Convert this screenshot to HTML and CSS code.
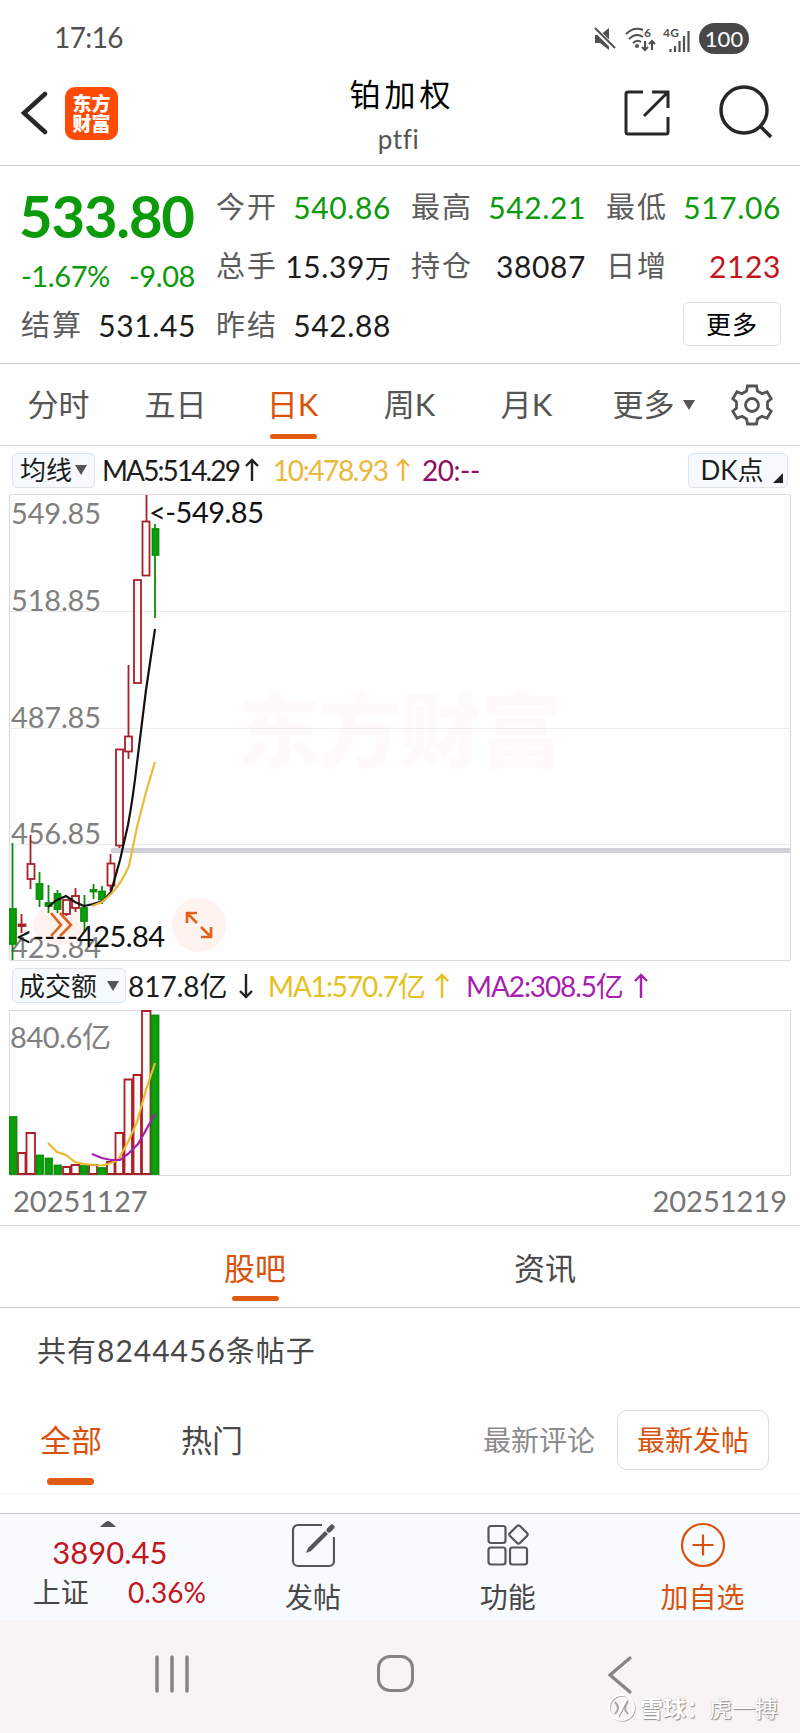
FILE: index.html
```html
<!DOCTYPE html>
<html lang="zh-CN">
<head>
  <meta charset="UTF-8" />
  <title>铂加权 ptfi</title>
  <link rel="stylesheet" href="styles.css">
</head>
<body>
  <div class="status">
    <span class="clock">17:16</span>
    <div class="status-icons">
      <svg class="i-mute" width="24" height="24" viewBox="0 0 24 24"><path d="M2 8h5l9-7v22l-9-7H2z" fill="#505050"/><path d="M1 1l21 21" stroke="#fff" stroke-width="5"/><path d="M2 1l20 20" stroke="#505050" stroke-width="2"/></svg>
      <svg class="i-wifi" width="34" height="26" viewBox="0 0 34 26" fill="none" stroke="#505050" stroke-width="2"><path d="M2 8Q10 0 19 4M5 13Q12 6 19 11M9 17Q13 13 17 16"/><circle cx="13" cy="20" r="1" fill="#505050"/><path d="M21 15v9M18 21l3 3 3-3M28 24v-9M25 18l3-3 3 3"/><text x="20" y="11" class="tiny">6</text></svg>
      <svg class="i-signal" width="30" height="28" viewBox="0 0 30 28"><text x="1" y="12" class="tiny" textLength="16">4G</text><path d="M8.500 27v-3M13 27v-6M17.500 27v-11M22 27v-16M26.500 27V6" stroke="#505050" stroke-width="2.200"/></svg>
      <span class="battery">100</span>
    </div>
  </div>

  <header>
    <svg class="back" width="30" height="44" viewBox="0 0 30 44"><path d="M25 3L4 22l21 19" fill="none" stroke="#272727" stroke-width="4.500" stroke-linecap="round"/></svg>
    <div class="logo">东方<br>财富</div>
    <div class="title"><h1>铂加权</h1><p>ptfi</p></div>
    <svg class="share" width="46" height="46" viewBox="0 0 46 46" fill="none" stroke="#272727" stroke-width="3"><path d="M19 2H4a2 2 0 0 0-2 2v38a2 2 0 0 0 2 2h38a2 2 0 0 0 2-2V27M28 2h16v16M44 2L20 26"/></svg>
    <svg class="search" width="56" height="56" viewBox="0 0 56 56" fill="none" stroke="#272727" stroke-width="3.500"><circle cx="26" cy="26" r="23"/><path d="M42 42l11 11"/></svg>
  </header>

  <section class="quote">
    <div class="price green">
      <b>533.80</b>
      <p><span>-1.67%</span><span>-9.08</span></p>
    </div>
    <div class="cell"><i>今开</i><span class="green">540.86</span></div>
    <div class="cell"><i>最高</i><span class="green">542.21</span></div>
    <div class="cell"><i>最低</i><span class="green">517.06</span></div>
    <div class="cell"><i>总手</i><span>15.39<em>万</em></span></div>
    <div class="cell"><i>持仓</i><span>38087</span></div>
    <div class="cell"><i>日增</i><span class="red">2123</span></div>
    <div class="cell"><i>结算</i><span>531.45</span></div>
    <div class="cell"><i>昨结</i><span>542.88</span></div>
    <button class="more">更多</button>
  </section>

  <nav class="periods">
    <a>分时</a><a>五日</a><a class="on">日K</a><a>周K</a><a>月K</a><a>更多</a>
    <svg class="caret" width="12" height="10" viewBox="0 0 12 10"><path d="M0 0h12L6 10z" fill="#555"/></svg>
    <svg class="gear" width="42" height="42" viewBox="-21 -21 42 42" fill="none" stroke="#555" stroke-width="2.800"><path d="M-4.500-19h9l1 5 4.500 2.700 5-2 4.200 7-3.700 3.300v6l3.700 3.300-4.200 7-5-2-4.500 2.700-1 5h-9l-1-5-4.500-2.700-5 2-4.200-7 3.700-3.300v-6l-3.700-3.300 4.200-7 5 2 4.500-2.700z"/><circle r="6.500"/></svg>
  </nav>

  <div class="ma-row">
    <span class="pick">均线<svg width="12" height="10" viewBox="0 0 12 10"><path d="M0 0h12L6 10z" fill="#555"/></svg></span>
    <span class="ma5">MA5:514.29</span>
    <svg class="arrow" width="14" height="24" viewBox="0 0 14 24"><path d="M7 23V2M1 8l6-6 6 6"/></svg>
    <span class="ma10">10:478.93</span>
    <svg class="arrow gold" width="14" height="24" viewBox="0 0 14 24"><path d="M7 23V2M1 8l6-6 6 6"/></svg>
    <span class="ma20">20:--</span>
    <span class="pick dk">DK点<svg width="10" height="10" viewBox="0 0 10 10"><path d="M10 0v10H0z" fill="#222"/></svg></span>
  </div>

  <svg class="chart" width="782" height="467" viewBox="9 494 782 467">
    <text class="brand" x="238" y="761" textLength="324">东方财富</text>
    <path class="grid" d="M9 611.500h781M9 728.500h781M9 844.500h781"/>
    <path class="frame" d="M9.500 494.500h781v466h-781z"/>
    <g class="axis">
      <text x="11" y="524" textLength="90">549.85</text>
      <text x="11" y="611" textLength="90">518.85</text>
      <text x="11" y="728" textLength="90">487.85</text>
      <text x="11" y="844" textLength="90">456.85</text>
      <text x="11" y="958" textLength="90">425.84</text>
    </g>
    <path d="M111 850.500h679" stroke="#d0d0d9" stroke-width="5"/>
    <ellipse cx="59" cy="925" rx="26" ry="20" fill="#fff3f0"/>
    <circle cx="199" cy="925" r="27" fill="#fff3f0"/>
    <g class="up">
      <path d="M21.500 914v19M30.500 835v29M30.500 879v10M66.500 914v2M75.500 888v8M75.500 908v4M110.500 854v9M110.500 885v6M119.500 845v3M128.500 665v71M128.500 751v8M146.500 495v26"/>
      <rect x="18.500" y="924.500" width="7" height="1.500"/>
      <rect x="27.500" y="864" width="7" height="15"/>
      <rect x="63" y="900" width="7" height="14"/>
      <rect x="72" y="896" width="7" height="12"/>
      <rect x="107.500" y="863.500" width="7" height="22"/>
      <rect x="116" y="749.500" width="7" height="96"/>
      <rect x="125" y="736.500" width="7" height="15"/>
      <rect x="134" y="580" width="7" height="103"/>
      <rect x="142.500" y="521.500" width="7" height="54"/>
    </g>
    <g class="down">
      <path d="M12.500 843v117M39.500 872v35M48.500 885v28M57.500 890v23M84.500 895v37M93.500 884v15M102 886v18M155 524v94"/>
      <rect x="9.500" y="909" width="6.500" height="35"/>
      <rect x="36.500" y="884" width="6" height="15"/>
      <rect x="45.500" y="903" width="6" height="3"/>
      <rect x="54.500" y="894" width="6" height="15"/>
      <rect x="81" y="908" width="6" height="13"/>
      <rect x="90.500" y="890" width="6" height="1.500"/>
      <rect x="99" y="891.500" width="6" height="8"/>
      <rect x="152.500" y="529" width="6" height="26"/>
    </g>
    <path class="line" stroke="#111" d="M48 907L57 900L66 896L75 902L84 906L93 904L103 901L111 892L120 860L128 825Q133 798 137 763L146 690L155 629"/>
    <path class="line" stroke="#e8b93c" d="M92 906L102 902L111 894Q121 884 129 866L137 827L146 792L155 762"/>
    <path class="orange" d="M51 913l10 12-10 11M60 913l11 12-11 11M187 923v-10h10M187 913l10 10M211 927v10h-10M211 937l-10-10"/>
    <g class="mark">
      <text x="149" y="523" textLength="115">&lt;-549.85</text>
      <text x="15" y="947" textLength="63" lengthAdjust="spacingAndGlyphs">&lt;----</text>
      <text x="77" y="947" textLength="88">425.84</text>
    </g>
  </svg>

  <div class="ma-row vol-row">
    <span class="pick vol">成交额<svg width="12" height="10" viewBox="0 0 12 10"><path d="M0 0h12L6 10z" fill="#555"/></svg></span>
    <span class="v0">817.8亿</span>
    <svg class="arrow" width="14" height="26" viewBox="0 0 14 26"><path d="M7 1v23M1 18l6 6 6-6"/></svg>
    <span class="v1">MA1:570.7亿</span>
    <svg class="arrow gold2" width="14" height="26" viewBox="0 0 14 26"><path d="M7 25V2M1 8l6-6 6 6"/></svg>
    <span class="v2">MA2:308.5亿</span>
    <svg class="arrow violet" width="14" height="26" viewBox="0 0 14 26"><path d="M7 25V2M1 8l6-6 6 6"/></svg>
  </div>

  <svg class="chart" width="782" height="166" viewBox="9 1010 782 166">
    <path class="frame" d="M9.500 1010.500h781v165h-781z"/>
    <g class="axis"><text x="10" y="1048" textLength="101">840.6亿</text></g>
    <g class="up">
      <path d="M18 1174v-21h7.500v21zM26.500 1174v-41h8.500v41zM63 1174v-7h7v7zM71.500 1174v-9h8v9zM89 1174v-9h8v9zM107 1174v-12h7.500v12zM115.500 1174v-41h7.500v41zM124.500 1174v-94.500h7.500v94.500zM133.500 1174v-99h7.500v99zM142 1174v-163h8.500v163z"/>
    </g>
    <g class="down">
      <rect x="9.500" y="1117" width="7" height="57"/>
      <rect x="36.500" y="1155.500" width="6.500" height="18.500"/>
      <rect x="45.500" y="1158.500" width="6.500" height="15.500"/>
      <rect x="54.500" y="1165.500" width="6.500" height="8.500"/>
      <rect x="80.500" y="1166" width="7" height="8"/>
      <rect x="98" y="1168" width="8" height="6"/>
      <rect x="151.500" y="1015.500" width="7" height="158.500"/>
    </g>
    <path class="line" stroke="#eab92c" d="M48 1143L57 1152L66 1155L75 1162L84 1164L93 1165L102 1165.500L111 1163L118 1160L128 1142L137 1122L146 1090L155 1063"/>
    <path class="line" stroke="#a61fae" d="M92 1154L102 1158L111 1160L120 1160L128 1154L138 1144L146 1130L155 1114"/>
  </svg>

  <div class="dates"><span>20251127</span><span>20251219</span></div>

  <nav class="tabs"><a class="on">股吧</a><a>资讯</a></nav>

  <section class="posts">
    <p class="count">共有<span>8244456</span>条帖子</p>
    <div class="filters">
      <a class="on">全部</a><a class="hot">热门</a>
      <span class="sort">最新评论</span><button class="sort on">最新发帖</button>
    </div>
  </section>

  <footer>
    <div class="index">
      <svg width="16" height="6" viewBox="0 0 16 6"><path d="M0 6Q6 0 8 0t8 6z" fill="#555"/></svg>
      <b class="red">3890.45</b>
      <p><span>上证</span><span class="red">0.36%</span></p>
    </div>
    <div class="act">
      <svg width="44" height="44" viewBox="0 0 44 44" fill="none" stroke="#555" stroke-width="2.200"><path d="M31 2H7a5 5 0 0 0-5 5v31a5 5 0 0 0 5 5h31a5 5 0 0 0 5-5V14"/><path d="M15 30l2-5L34 8l3 3-17 17z" fill="#555" stroke="none"/><path d="M38 7l3-3" stroke-width="5" stroke-linecap="round"/></svg>
      发帖
    </div>
    <div class="act">
      <svg width="44" height="44" viewBox="0 0 44 44" fill="none" stroke="#555" stroke-width="2.200"><rect x="2.500" y="3" width="17" height="17" rx="2.500"/><rect x="2.500" y="24.500" width="17" height="17" rx="2.500"/><rect x="24" y="24.500" width="17" height="17" rx="2.500"/><rect x="25.500" y="4.500" width="14" height="14" rx="2" transform="rotate(45 32.500 11.500)"/></svg>
      功能
    </div>
    <div class="act add">
      <svg width="46" height="46" viewBox="0 0 46 46" fill="none" stroke="#d9520c" stroke-width="2.200"><circle cx="23" cy="23" r="21"/><path d="M12.500 23h21M23 12.500v21"/></svg>
      加自选
    </div>
  </footer>

  <div class="sysnav">
    <svg class="recent" width="36" height="38" viewBox="0 0 36 38"><path d="M3 2v34M18 2v34M33 2v34" stroke="#858485" stroke-width="3.500" stroke-linecap="round"/></svg>
    <span class="home"></span>
    <svg class="prev" width="26" height="40" viewBox="0 0 26 40"><path d="M23 3L3 20l20 17" fill="none" stroke="#858485" stroke-width="3.200" stroke-linecap="round"/></svg>
    <div class="credit">
      <svg width="28" height="28" viewBox="0 0 28 28" fill="none"><circle cx="14.500" cy="14.500" r="12.500" stroke="#aaa" stroke-width="1.500"/><circle cx="13.500" cy="13.500" r="12.500" stroke="#fff" stroke-width="2"/><path d="M7 8q6 6 0 12M20 8q-6 6 0 12" stroke="#a5a5a5" stroke-width="2"/><path d="M18 5L9 23" stroke="#fff" stroke-width="3"/><path d="M20 6l-9 17" stroke="#a5a5a5" stroke-width="1.200"/></svg>
      <span><b>雪球：</b>虎一搏</span>
    </div>
  </div>
</body>
</html>
```

FILE: styles.css
```css
* { box-sizing: border-box; margin: 0; padding: 0; }
body { width: 800px; height: 1733px; overflow: hidden; background: #fefefe; color: #1c1c1c; font-family: Lato, "Noto Sans CJK SC", sans-serif; font-size: 30px; line-height: 1; }
svg { display: block; flex: none; }
i, em { font-style: normal; }
a, span, i, b, p, h1 { white-space: nowrap; }
button { background: #fefefe; font-family: inherit; line-height: 1; }
.green { color: #0a9a0a; }
.red { color: #c3161c; }

.status { height: 68px; padding: 9px 51px 0 54px; display: flex; align-items: center; justify-content: space-between; color: #505050; font-size: 28px; }
.clock { margin-top: -3px; letter-spacing: -.6px; }
.status-icons { display: flex; align-items: center; }
.i-wifi { margin-left: 7px; }
.i-signal { margin-left: 4px; }
.tiny { font-size: 12px; font-weight: bold; fill: #505050; stroke: none; }
.battery { width: 50px; height: 31px; margin-left: 7px; border-radius: 16px; background: #484848; color: #fff; font-size: 22px; line-height: 31px; text-align: center; }

header { height: 98px; padding: 0 26px 7px 20px; border-bottom: 1px solid #ccc; display: flex; align-items: center; }
.logo { width: 53px; height: 53px; margin-left: 15px; padding-top: 7px; border-radius: 10px; background: #ff4b05; color: #fff; font-size: 19px; font-weight: 900; line-height: 20px; text-align: center; }
.title { flex: 1; margin: 3px 0 0 172px; text-align: center; }
.title h1 { color: #000; font-size: 31px; font-weight: normal; letter-spacing: 4px; line-height: 36px; }
.title p { margin-top: 12px; padding-right: 7px; color: #555; font-size: 26px; line-height: 30px; letter-spacing: .6px; }
.share { margin-left: 110px; }
.search { margin-left: 48px; margin-top: -2px; }

.quote { height: 198px; padding: 11px 19px 11px 21px; border-bottom: 1px solid #ccc; display: grid; grid-template-columns: repeat(4, 174px); grid-template-rows: repeat(3, 59px); column-gap: 21px; }
.price { grid-row: span 2; }
.price b { display: block; margin-left: -2px; font-size: 58px; line-height: 78px; letter-spacing: -1.2px; }
.price p { display: flex; justify-content: space-between; font-size: 29px; line-height: 41px; letter-spacing: -.4px; }
.cell { display: flex; align-items: center; justify-content: space-between; }
.cell i { color: #5c5c5c; font-size: 29px; letter-spacing: 2px; }
.cell span { margin-right: -1px; letter-spacing: .6px; }
.cell em { font-size: 26px; letter-spacing: 0; }
.more { grid-column: 4; width: 98px; height: 44px; margin: 7px -1px 0 0; justify-self: end; border: 1px solid #ddd; border-radius: 5px; font-size: 25px; letter-spacing: 1px; }

.periods { height: 82px; border-bottom: 1px solid #d4d4d4; display: flex; align-items: center; color: #555; font-size: 31px; }
.periods a { position: relative; width: 117px; height: 81px; line-height: 81px; text-align: center; }
.on { color: #d9520c; }
.periods .on::after, .tabs .on::after { content: ""; position: absolute; left: 50%; bottom: 6px; width: 47px; height: 5px; margin-left: -23px; border-radius: 3px; background: #e15a12; }
.periods .caret { margin-left: -19px; }
.gear { margin-left: 36px; }

.ma-row { height: 48px; padding: 0 12px; display: flex; align-items: center; font-size: 28px; }
.pick { width: 83px; height: 35px; border: 1px solid #dde4ea; border-radius: 5px; background: #f6fafe; display: flex; align-items: center; justify-content: center; gap: 3px; font-size: 26px; }
.dk { position: relative; width: 100px; margin-left: auto; padding-right: 12px; }
.dk svg { position: absolute; right: 4px; bottom: 4px; }
.ma5 { width: 136px; margin-left: 7px; letter-spacing: -1.9px; }
.arrow { margin-left: 7px; fill: none; stroke: #222; stroke-width: 2.4; }
.gold { stroke: #e8b93c; margin-left: 9px; }
.gold2 { stroke: #e6c01c; }
.violet { stroke: #a61fae; }
.ma10 { width: 114px; margin-left: 14px; color: #e8b93c; letter-spacing: -1.4px; }
.ma20 { margin-left: 12px; color: #8f0f63; letter-spacing: -.5px; }
.vol-row { height: 49px; }
.vol { width: 114px; gap: 10px; }
.v0 { width: 102px; margin-left: 2px; }
.v0 + .arrow { margin-left: 9px; }
.v1, .v2 { width: 157px; letter-spacing: -1.1px; }
.v1 { margin-left: 15px; color: #e6c01c; }
.ma-row .gold2 { margin-left: 10px; }
.v2 { margin-left: 17px; color: #a61fae; }
.ma-row .violet { margin-left: 11px; }

.chart { margin-left: 9px; }
.frame { fill: none; stroke: #dcdcdf; }
.grid { stroke: #ececec; }
.brand { font-size: 82px; font-weight: 900; fill: #fefafb; }
.axis { font-size: 29px; fill: #808080; }
.mark { font-size: 29px; fill: #111; }
.up { fill: #fffafa; stroke: #a82028; stroke-width: 1.8; }
.down { fill: #0aa00a; stroke: #0a8f0a; stroke-width: 1.8; }
.line { fill: none; stroke-width: 2.2; }
.orange { fill: none; stroke: #df611b; stroke-width: 2.6; }

.dates { height: 50px; padding: 0 13px; border-bottom: 1px solid #d4d4d4; display: flex; align-items: center; justify-content: space-between; color: #757575; font-size: 29px; }

.tabs { height: 82px; padding: 0 110px; border-bottom: 1px solid #ccc; display: flex; color: #4a4a4a; font-size: 31px; }
.tabs a { position: relative; width: 290px; line-height: 84px; text-align: center; }

.posts { height: 205px; }
.count { padding: 25px 0 0 37px; color: #484848; font-size: 29px; line-height: 34px; letter-spacing: 1px; }
.count span { font-size: 30px; }
.filters { height: 126px; padding: 19px 31px 0 40px; border-bottom: 1px solid #f7f7f7; display: flex; align-items: center; font-size: 31px; color: #484848; }
.filters a { position: relative; width: 141px; }
.filters a.on::after { content: ""; position: absolute; left: 7px; top: 53px; width: 47px; height: 7px; border-radius: 4px; background: #e15a12; }
.sort { color: #8b8b8b; font-size: 28px; }
.filters .on { color: #d9520c; }
span.sort { margin-left: auto; }
button.sort { width: 152px; height: 60px; margin-left: 22px; border: 1px solid #ddd; border-radius: 10px; }

footer { height: 107px; border-top: 1px solid #c8c8c8; background: #f8fbfe; display: flex; color: #484848; font-size: 28px; }
.index { width: 216px; padding-top: 7px; display: flex; flex-direction: column; align-items: center; }
.index b { margin: 8px 0 0 4px; font-size: 31px; font-weight: normal; line-height: 34px; }
.index p { width: 173px; margin: 8px 0 0 23px; display: flex; justify-content: space-between; line-height: 30px; }
.act { width: 195px; padding-top: 8px; display: flex; flex-direction: column; align-items: center; }
.act svg { height: 46px; margin-bottom: 15px; }
.add { color: #d9520c; }

.sysnav { position: relative; height: 113px; padding-top: 35px; background: #f8f4f6; display: flex; }
.recent { margin-left: 154px; }
.home { width: 37px; height: 37px; margin-left: 187px; border: 3px solid #858485; border-radius: 13px; }
.prev { margin-left: 193px; }
.credit { position: absolute; left: 608px; top: 74px; display: flex; align-items: center; gap: 4px; color: #fff; font-size: 23px; text-shadow: 1px 1px 1px #8c8c8c, 0 0 1px #aaa; }
```
